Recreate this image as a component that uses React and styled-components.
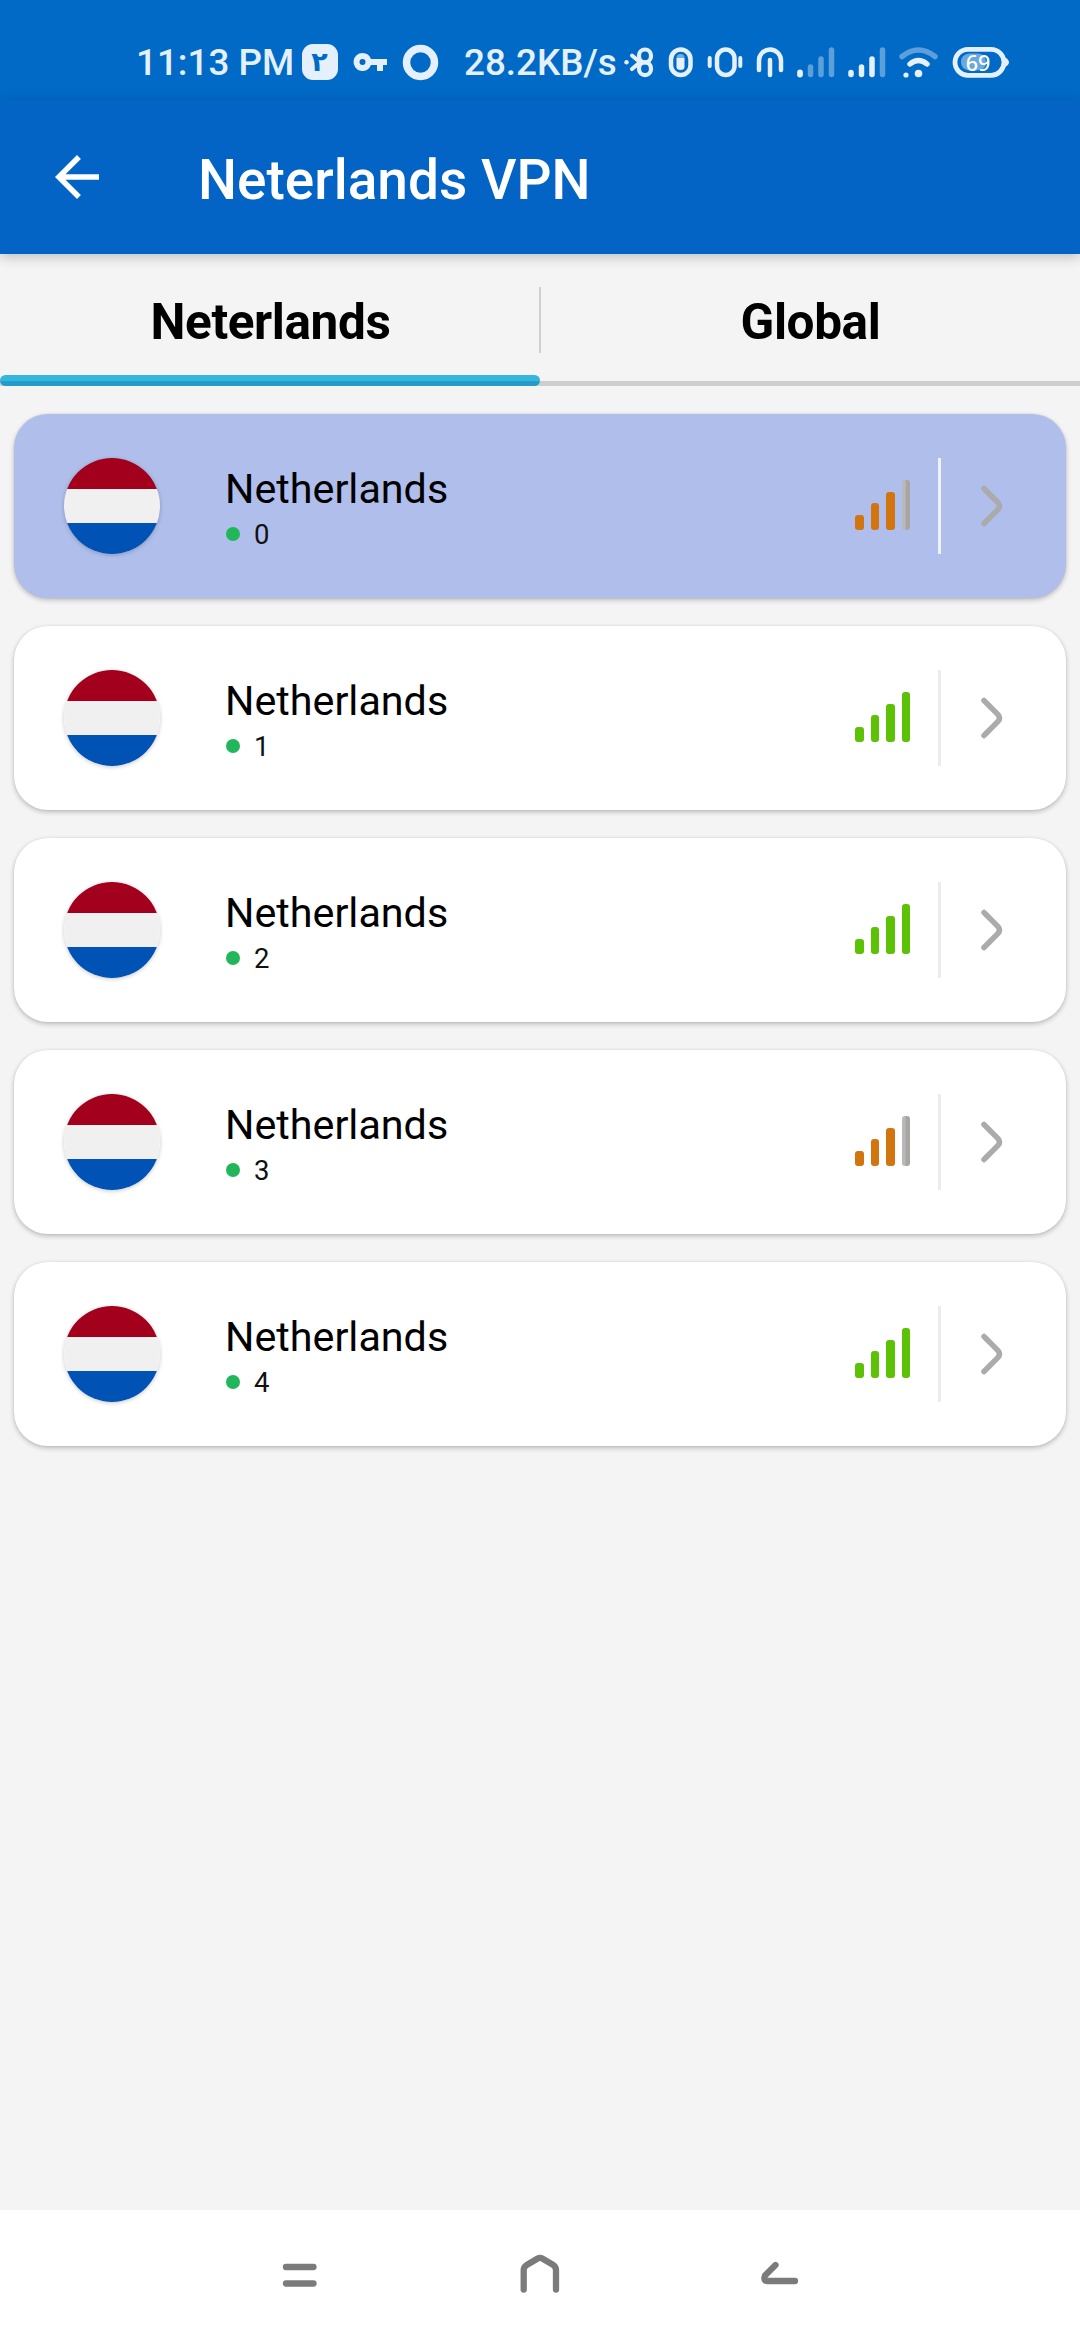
import React from "react";
import styled, { createGlobalStyle } from "styled-components";

const GlobalStyle = createGlobalStyle`
  * {
    box-sizing: border-box;
  }
  body {
    margin: 0;
    background: #f4f4f4;
    font-family: Roboto, "Noto Sans", sans-serif;
  }
  svg {
    display: block;
    flex: none;
  }
`;

const Screen = styled.div`
  display: flex;
  flex-direction: column;
  width: 1080px;
  height: 2340px;
  background: #f4f4f4;
  overflow: hidden;
`;

const StatusBar = styled.div`
  display: flex;
  align-items: center;
  height: 100px;
  padding: 24px 0 0 136px;
  background: #006ac6;
  color: #e4f0fb;
`;

const StatusText = styled.span`
  width: ${(props) => props.$width}px;
  padding-top: 1px;
  font-size: 36.8px;
  line-height: 76px;
  font-weight: 500;
  white-space: nowrap;
`;

const StatusIcons = styled.svg`
  width: ${(props) => props.$width}px;
  height: 76px;
`;

const AppBar = styled.header`
  display: flex;
  align-items: center;
  gap: 88px;
  height: 154px;
  padding: 0 44px;
  background: #0364c5;
  color: #fff;
  box-shadow: 0 3px 12px rgba(0, 0, 0, 0.22);
  z-index: 1;
`;

const Title = styled.h1`
  margin: 5px 0 0;
  font-size: 55px;
  line-height: 64px;
  font-weight: 500;
`;

const Tabs = styled.nav`
  display: flex;
  align-items: center;
  height: 132px;
  border-bottom: 5px solid #cdcfcf;
`;

const Tab = styled.div`
  position: relative;
  flex: 1;
  height: 127px;
  padding: 38px 0 0 1px;
  font-size: 49.5px;
  line-height: 60px;
  font-weight: 700;
  letter-spacing: -0.4px;
  text-align: center;
  color: #000;
`;

const TabDivider = styled.div`
  width: 2px;
  height: 66px;
  margin: 5px -1px 0;
  background: #cfcfcf;
`;

const Indicator = styled.div`
  position: absolute;
  left: 0;
  right: 0;
  bottom: -5px;
  height: 11px;
  border-radius: 5.5px;
  background: linear-gradient(#36b5dd 0 52%, #249bc8 60% 100%);
`;

const ServerList = styled.main`
  display: flex;
  flex: 1;
  flex-direction: column;
  gap: 28px;
  padding: 28px 14px;
`;

const Card = styled.div`
  display: flex;
  align-items: center;
  height: 184px;
  padding: 0 50px;
  border-radius: 34px;
  background: ${(props) => (props.$selected ? "#afbeeb" : "#fff")};
  box-shadow: 0 2px 5px rgba(0, 0, 0, 0.24), 0 0 2px rgba(0, 0, 0, 0.08);
`;

const Flag = styled.div`
  width: 96px;
  height: 96px;
  border-radius: 50%;
  background: linear-gradient(
    #a2001d 0 31px,
    #f0f0f0 31px 65px,
    #0052b4 65px 96px
  );
  box-shadow: 0 1px 4px rgba(0, 0, 0, 0.22);
`;

const Info = styled.div`
  flex: 1;
  margin-left: 65px;
  padding-top: 3px;
`;

const Country = styled.div`
  font-size: 41.25px;
  line-height: 48px;
  color: #000;
`;

const Status = styled.div`
  display: flex;
  align-items: center;
  gap: 14px;
  padding-left: 1px;
  font-size: 27.5px;
  line-height: 32px;
  margin-top: 6px;
  color: #111;
`;

const Dot = styled.span`
  width: 14px;
  height: 14px;
  margin-top: -1px;
  border-radius: 50%;
  background: #22b65a;
`;

const Bars = styled.div`
  display: flex;
  align-items: flex-end;
  gap: 7px;
  width: 55px;
  height: 50px;
  margin: 0 28px 2px 0;
`;

const Bar = styled.span`
  flex: 1;
  height: ${(props) => props.$height}px;
  border-radius: 3px;
  background: ${(props) => props.$color};
`;

const Separator = styled.div`
  width: 3px;
  height: 96px;
  margin-right: 38px;
  background: ${(props) => (props.$selected ? "#eef3fb" : "#ececec")};
`;

const NavBar = styled.footer`
  display: flex;
  align-items: center;
  justify-content: center;
  height: 130px;
  background: #fff;
`;

const servers = [
  { id: 0, level: 3 },
  { id: 1, level: 4 },
  { id: 2, level: 4 },
  { id: 3, level: 3 },
  { id: 4, level: 4 },
];

const barHeights = [15.5, 27, 38.5, 50];
const emptyBar = "linear-gradient(90deg, #b9b8bb 40%, #a8a5a2 50%)";

function NotificationIcons() {
  return (
    <StatusIcons $width={162} viewBox="302 24 162 76">
      <rect x="302" y="44" width="36" height="36" rx="11" fill="#e4f0fb" />
      <text
        x="319.5"
        y="71"
        fontFamily="DejaVu Sans"
        fontSize="27"
        fontWeight="700"
        textAnchor="middle"
        fill="#006ac6"
      >
        ٢
      </text>
      <path
        fill="#e4f0fb"
        fillRule="evenodd"
        d="M362.500 53a9 9 0 0 1 8.500 6H387v6h-4v6h-6v-6h-6a9 9 0 1 1-8.500-12zm0 6a3 3 0 1 0 0 6 3 3 0 0 0 0-6z"
      />
      <circle cx="420.500" cy="62.500" r="14" fill="none" stroke="#e4f0fb" strokeWidth="7.500" />
    </StatusIcons>
  );
}

function SystemIcons() {
  return (
    <StatusIcons
      $width={396}
      viewBox="622 24 396 76"
      fill="none"
      stroke="#e4f0fb"
      strokeWidth="4.500"
      strokeLinecap="round"
    >
      {/* bluetooth */}
      <rect x="639" y="49.500" width="12" height="12.800" rx="6" strokeWidth="4.200" />
      <rect x="639" y="62.300" width="12" height="12.800" rx="6" strokeWidth="4.200" />
      <path d="M632 55.500l8 6.800-8 6.800" strokeWidth="4" />
      <circle cx="626.500" cy="62.300" r="2.200" fill="#e4f0fb" stroke="none" />
      {/* data saver */}
      <rect x="671" y="49.500" width="19.500" height="25.500" rx="9.750" />
      <path d="M676.500 58h8v9q0 3-4 3t-4-3z" fill="#e4f0fb" stroke="none" />
      <path d="M676.500 58q0-4 4-4t4 4z" fill="#e4f0fb" stroke="none" opacity=".5" />
      {/* vibrate */}
      <rect x="717" y="49.500" width="17.500" height="25.500" rx="8.750" />
      <path d="M709.700 58v8M740.300 58v8" strokeWidth="4" />
      {/* hotspot */}
      <path d="M759 70V60.500a11 11 0 0 1 22 0v9.500M770 60v15" />
      {/* sim 1 */}
      <path d="M800 72.500v2" strokeWidth="5.800" />
      <path d="M810.500 67v7.500M821 59v15.500M831.500 50v24.500" strokeWidth="5.500" opacity=".4" />
      {/* sim 2 */}
      <path d="M851 72.500v2M861.500 67v7.500M872 59v15.500" strokeWidth="5.500" />
      <path d="M882.500 50v24.500" strokeWidth="5.500" opacity=".4" />
      {/* wifi */}
      <path d="M902 56.500q16.500-13 33 0" strokeWidth="5.500" opacity=".4" />
      <path d="M910 64q8.500-7 17 0" strokeWidth="5.500" />
      <circle cx="918.500" cy="73.500" r="3.800" fill="#e4f0fb" stroke="none" />
      <circle cx="906" cy="75" r="2.600" fill="#e4f0fb" stroke="none" />
      {/* battery */}
      <rect x="955" y="49.300" width="49" height="26" rx="13" strokeWidth="4.800" />
      <path d="M1005 57.500q4 2 4 4.700t-4 4.700z" fill="#e4f0fb" stroke="none" />
      <path d="M969 53.500h8q9 0 9 8.500t-9 8.500h-8q-8-1-8-8.500t8-8.500z" fill="#6aa8e0" stroke="none" />
      <text
        x="978"
        y="70.500"
        fontFamily="Noto Sans"
        fontSize="21.500"
        fontWeight="500"
        textAnchor="middle"
        stroke="none"
        fill="#fff"
      >
        69
      </text>
    </StatusIcons>
  );
}

function SignalBars({ level }) {
  const color = level === 4 ? "#5dc105" : "#d2750f";
  return (
    <Bars>
      {barHeights.map((height, i) => (
        <Bar key={height} $height={height} $color={i < level ? color : emptyBar} />
      ))}
    </Bars>
  );
}

function ServerCard({ server, selected }) {
  return (
    <Card $selected={selected}>
      <Flag />
      <Info>
        <Country>Netherlands</Country>
        <Status>
          <Dot />
          {server.id}
        </Status>
      </Info>
      <SignalBars level={server.level} />
      <Separator $selected={selected} />
      <svg width="37" height="48" viewBox="979 481.500 37 48" fill="none">
        <path
          d="M984 488l14 14q3 3.500 0 7l-14 14"
          stroke="#ababab"
          strokeWidth="5.500"
          strokeLinecap="round"
        />
      </svg>
    </Card>
  );
}

function App() {
  return (
    <React.Fragment>
      <GlobalStyle />
      <Screen>
        <StatusBar>
          <StatusText $width={166}>11:13 PM</StatusText>
          <NotificationIcons />
          <StatusText $width={158}>28.2KB/s</StatusText>
          <SystemIcons />
        </StatusBar>
        <AppBar>
          <svg width="66" height="66" viewBox="0 0 24 24" fill="#fff">
            <path d="M20 11H7.830l5.590-5.590L12 4l-8 8 8 8 1.410-1.410L7.830 13H20v-2z" />
          </svg>
          <Title>Neterlands VPN</Title>
        </AppBar>
        <Tabs>
          <Tab>
            Neterlands
            <Indicator />
          </Tab>
          <TabDivider />
          <Tab>Global</Tab>
        </Tabs>
        <ServerList>
          {servers.map((server) => (
            <ServerCard key={server.id} server={server} selected={server.id === 0} />
          ))}
        </ServerList>
        <NavBar>
          <svg
            width="540"
            height="130"
            viewBox="270 2210 540 130"
            fill="none"
            stroke="#7b7b7b"
            strokeWidth="6.300"
            strokeLinecap="round"
            strokeLinejoin="round"
          >
            <path d="M286 2267h27.500M286 2283.500h27.500" />
            <path d="M523.700 2289.500v-19.500q0-3 3-5l11-6.500q2.300-1.300 4.600 0l11 6.500q2.700 2 2.700 5v19.500" />
            <path d="M775.500 2265l-10.500 10.500q-2 5.500 2.500 5.500h27.500" />
          </svg>
        </NavBar>
      </Screen>
    </React.Fragment>
  );
}

export default App;
